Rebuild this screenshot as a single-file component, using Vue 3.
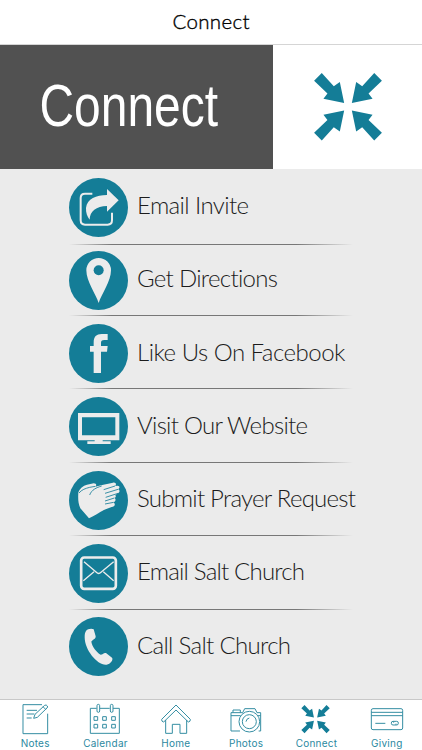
<template>
    <div class="screen">
        <header class="topbar">
            <svg width="422" height="44"><text x="172.5" y="29" textLength="77">Connect</text></svg>
        </header>
        <section class="banner">
            <div class="banner-title">
                <svg width="273" height="123">
                    <text x="39.5" y="81" textLength="178.5" lengthAdjust="spacingAndGlyphs">Connect</text>
                </svg>
            </div>
            <div class="banner-logo">
                <svg width="68" height="67.5" viewBox="0 0 203 202">
                    <polygon v-for="t in flips" :key="t" :points="arrow" :transform="t" />
                </svg>
            </div>
        </section>
        <ul class="links">
            <li v-for="item in links" :key="item.label">
                <svg class="round" width="59" height="59" viewBox="0 0 177 177">
                    <circle cx="88.5" cy="88.5" r="88.5" fill="#147d97" />
                    <g v-html="item.icon"></g>
                </svg>
                <svg class="label" width="240" height="40">
                    <text x="0" y="27" :textLength="item.width">{{ item.label }}</text>
                </svg>
            </li>
        </ul>
        <nav class="tabs">
            <a v-for="tab in tabs" :key="tab.label">
                <svg width="70.33" height="35" viewBox="0 0 211 105">
                    <g v-if="tab.label === 'Connect'" class="solid" transform="translate(61 15) scale(.42)">
                        <polygon v-for="t in flips" :key="t" :points="arrow" :transform="t" />
                    </g>
                    <g v-else class="outline" v-html="tab.icon"></g>
                </svg>
                <span>{{ tab.label }}</span>
            </a>
        </nav>
    </div>
</template>
<script setup>
// one arrow, mirrored into the four corners
const arrow = '23,0 59,40 77,27 90,90 28,77 40,61 0,23';
const flips = [
    'scale(1 1)',
    'translate(203 0) scale(-1 1)',
    'translate(0 202) scale(1 -1)',
    'translate(203 202) scale(-1 -1)',
];

const links = [
    {
        label: 'Email Invite',
        width: 112,
        icon: `<path d="M70 47H48Q35 47 35 60V127Q35 140 48 140H116Q129 140 129 127V104" fill="none" stroke="#ececec" stroke-width="6"/>
            <path d="M149 67L114 33V51C82 51 54 62 51 90C50 104 55 116 62 125C62 100 82 85 114 84V101Z" fill="#ececec" stroke="#147d97" stroke-width="4" paint-order="stroke"/>`,
    },
    {
        label: 'Get Directions',
        width: 141,
        icon: `<path d="M89 156C80 128 52 92 52 58A37 37 0 0 1 126 58C126 92 98 128 89 156Z" fill="#ececec"/>
            <circle cx="89" cy="58" r="15" fill="#147d97"/>`,
    },
    {
        label: 'Like Us On Facebook',
        width: 208.5,
        icon: `<path d="M74 147V83H63V66H74V56C74 38 82 30 98 30H116V48H106C98 48 96 51 96 57V66H116L114 83H96V147Z" fill="#ececec"/>`,
    },
    {
        label: 'Visit Our Website',
        width: 171,
        icon: `<path d="M27 48H151V130H101V133H125V141H55V133H77V130H27ZM39 61V115H139V61Z" fill="#ececec" fill-rule="evenodd"/>`,
    },
    {
        label: 'Submit Prayer Request',
        width: 219,
        icon: `<path d="M60 142L34 112C27 98 27 82 28 64C32 52 42 44 54 41L74 37C82 37 84 43 79 47L96 43L132 35C140 33 144 40 138 45L146 44C153 45 153 52 147 55C153 56 153 64 147 67L139 72C142 76 140 80 136 81C142 84 140 91 134 94L137 98C139 104 134 107 128 108L110 115C96 120 82 132 60 142Z" fill="#ececec"/>
            <path d="M30 66C38 56 50 52 62 49L79 46M62 72C68 56 82 50 98 45M138 45L104 56M147 55L108 67M147 67L110 79M136 81L108 90M134 94L108 99" fill="none" stroke="#147d97" stroke-width="2.500"/>`,
    },
    {
        label: 'Email Salt Church',
        width: 168,
        icon: `<rect x="36.500" y="40.500" width="104" height="94" rx="9" fill="none" stroke="#ececec" stroke-width="8"/>
            <path d="M45 53L82 85Q89 92 96 85L134 53M43 110L75 83M134 110L103 83" fill="none" stroke="#ececec" stroke-width="4"/>`,
    },
    {
        label: 'Call Salt Church',
        width: 154,
        icon: `<path d="M51 42C55 35 69 33 74 37L80 58C81 66 70 69 67 74C70 90 82 105 95 113C101 113 104 106 111 108L129 122C134 128 124 141 113 143C87 147 47 100 47 61C47 51 48 47 51 42Z" fill="#ececec"/>`,
    },
];

const tabs = [
    {
        label: 'Notes',
        icon: `<path d="M126 14H69V101H143V41M80 31H111M80 42H103M80 54H95"/><path d="M101 55L105 43L134 16Q139 13 142 18Q144 21 141 24L112 52ZM129 20L137 28"/>`,
    },
    {
        label: 'Calendar',
        icon: `<path d="M80 25H61V100H148V25H129M90 25H119M72 50h11v11h-11ZM98 50h11v11h-11ZM125 50h11v11h-11ZM72 73h11v11h-11ZM98 73h11v11h-11ZM125 73h11v11h-11Z"/><rect x="81" y="13" width="8" height="24" rx="4"/><rect x="121" y="13" width="8" height="24" rx="4"/>`,
    },
    {
        label: 'Home',
        icon: `<path d="M105 15L62 58Q61 65 68 66L105 30L142 66Q149 65 148 58ZM74 60V100H94V73H117V100H137V60"/>`,
    },
    {
        label: 'Photos',
        icon: `<path d="M87 93H60V38H95L101 26H132L138 38H149V93H143M66 38V30H88V38M60 47H89M141 47H149"/><circle cx="115" cy="65" r="31"/><circle cx="115" cy="65" r="21"/><path d="M105 65Q106 56 115 54"/>`,
    },
    { label: 'Connect' },
    {
        label: 'Giving',
        icon: `<rect x="58" y="26" width="94" height="63" rx="5"/><path d="M58 37H152M58 47H152M70 70H100"/><rect x="118" y="64" width="21" height="11" rx="5"/><path d="M125 64V68M132 71V75"/>`,
    },
];
</script>
<style>
body {
    margin: 0;
    background: #fff;
}
</style>
<style scoped>
.screen {
    width: 422px;
    height: 750px;
    display: flex;
    flex-direction: column;
    background: #ebebeb;
    overflow: hidden;
}

svg {
    display: block;
    flex: none;
}

.topbar {
    height: 44px;
    background: #fff;
    border-bottom: 1px solid #d5d5d5;
}

.topbar text {
    font: 300 20.5px Lato, sans-serif;
    fill: #000;
    stroke: #000;
    stroke-width: 0.35px;
}

.banner {
    display: flex;
    height: 123.5px;
    flex: none;
    background: #fff;
}

.banner-title {
    width: 273px;
    background: #515151;
}

.banner-title text {
    font: 58.5px "Liberation Sans", Arial, sans-serif;
    fill: #fff;
}

.banner-logo {
    flex: 1;
    display: flex;
    align-items: center;
    justify-content: center;
    fill: #147d97;
}

.links {
    list-style: none;
    margin: 0;
    padding: 2px 0 0 69px;
    flex: 1;
}

.links li {
    position: relative;
    display: flex;
    align-items: center;
    height: 73.25px;
}

.links li:not(:last-child)::after {
    content: "";
    position: absolute;
    left: 0;
    bottom: 0.5px;
    width: 284px;
    height: 1px;
    background: linear-gradient(90deg, transparent, #777 15%, #777 80%, transparent);
}

.links li:first-child::after {
    bottom: -1px;
}

.links li:nth-child(2)::after {
    bottom: 1.5px;
}

.links li:nth-child(3)::after {
    bottom: 1.5px;
}

.label {
    margin-left: 9px;
    overflow: visible;
}

.label text {
    font: 300 24px Lato, sans-serif;
    font-variant-ligatures: none;
    fill: #1c1c1c;
}

.tabs {
    height: 50px;
    flex: none;
    display: flex;
    background: #fff;
    border-top: 1px solid #c8c8c8;
}

.tabs a {
    flex: 1;
    color: #2b899f;
    text-align: center;
}

.tabs span {
    display: block;
    padding-top: 0.5px;
    font: 400 10px/14px Inter, sans-serif;
    letter-spacing: 0.25px;
}

.solid {
    fill: #147d97;
}

.outline {
    fill: none;
    stroke: #348ea3;
    stroke-width: 3;
    stroke-linejoin: round;
}
</style>
